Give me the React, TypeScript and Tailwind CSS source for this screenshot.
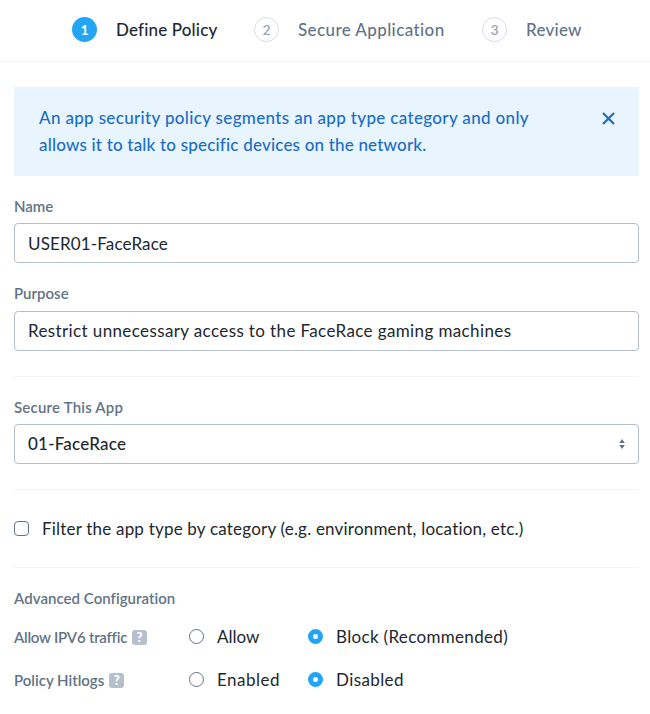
import { type ReactNode } from 'react';

function Step({ n, label, active, width, tracking }: { n: number; label: string; active?: boolean; width: string; tracking: string }) {
  return (
    <div className={`flex items-center ${width}`}>
      <span
        className={`mr-[19px] flex size-[25px] shrink-0 items-center justify-center rounded-full text-[14px] ${
          active ? 'bg-[#22a5f7] font-bold text-white' : 'border border-[#d9dce6] font-semibold text-[#9aa5b5]'
        }`}
      >
        {n}
      </span>
      <span className={`whitespace-nowrap text-[17px] font-medium ${tracking} ${active ? 'text-[#22272e]' : 'text-[#627386]'}`}>{label}</span>
    </div>
  );
}

function Label({ children, className = '' }: { children: ReactNode; className?: string }) {
  return <div className={`whitespace-nowrap text-[15px] leading-5 font-semibold text-[#627386] ${className}`}>{children}</div>;
}

function Help() {
  return (
    <span className="ml-[5px] flex size-[15px] items-center justify-center rounded-[3px] bg-[#b8bfcc] text-[13px] leading-none font-black text-white">?</span>
  );
}

function Radio({ label, checked, tracking = '', className = '' }: { label: string; checked?: boolean; tracking?: string; className?: string }) {
  return (
    <label className={`flex items-center whitespace-nowrap text-[17px] leading-6 ${tracking} ${className}`}>
      <span className={`relative -top-px mr-[13px] size-[15px] shrink-0 rounded-full ${checked ? 'border-[5px] border-[#22a5f7]' : 'border border-[#627386]'}`} />
      {label}
    </label>
  );
}

export default function App() {
  return (
    <div className="h-[714px] w-[650px] overflow-hidden bg-white font-['Lato',sans-serif] text-[#22272e] [font-variant-ligatures:none]">
      <header className="flex h-[62px] items-center border-b border-[#f2f4f6] pb-[2px] pl-[72px]">
        <Step n={1} label="Define Policy" active width="w-[182px]" tracking="tracking-[0.16px]" />
        <Step n={2} label="Secure Application" width="w-[228px]" tracking="tracking-[0.4px]" />
        <Step n={3} label="Review" width="w-[120px]" tracking="tracking-[0.25px]" />
      </header>
      <main className="pt-[25px] pr-[11px] pl-[14px]">
        <section className="flex h-[89px] justify-between bg-[#e9f5fe] pt-[17px] pr-[24px] pl-[25px] text-[17px] leading-[27px] font-medium text-[#1b6dc6]">
          <p className="whitespace-nowrap">
            <span className="tracking-[0.34px]">An app security policy segments an app type category and only</span>
            <br />
            <span className="tracking-[0.19px]">allows it to talk to specific devices on the network.</span>
          </p>
          <svg className="mt-[8px] size-[13px]" viewBox="0 0 13 13" fill="none" stroke="currentColor" strokeWidth="2.2">
            <path d="M1 1l11 11M12 1L1 12" />
          </svg>
        </section>
        <Label className="mt-[20px]">Name</Label>
        <div className="mt-[7px] flex h-10 items-center rounded-[4px] border border-[#b8bfcc] px-[13px] pt-px text-[17px] tracking-[0.15px]">USER01-FaceRace</div>
        <Label className="mt-[20px]">Purpose</Label>
        <div className="mt-[8px] flex h-10 items-center rounded-[4px] border border-[#b8bfcc] px-[13px] text-[17px] tracking-[0.38px]">
          Restrict unnecessary access to the FaceRace gaming machines
        </div>
        <div className="mt-[25px] h-px bg-[#f2f4f6]" />
        <Label className="mt-[20px] tracking-[0.2px]">Secure This App</Label>
        <div className="mt-[7px] flex h-10 items-center justify-between rounded-[4px] border border-[#b8bfcc] px-[13px] text-[17px] font-medium tracking-[0.22px]">
          <span>01-FaceRace</span>
          <svg className="h-[10px] w-[6px]" viewBox="0 0 6 10" fill="#627386">
            <path d="M3 0L5.8 4H.2zM3 10L.2 6h5.6z" />
          </svg>
        </div>
        <div className="mt-[25px] h-px bg-[#f2f4f6]" />
        <label className="mt-[27px] flex h-6 items-center text-[17px] tracking-[0.2px] whitespace-nowrap">
          <span className="relative -top-px mr-[13px] size-[15px] rounded-[4px] border border-[#627386]" />
          Filter the app type by category (e.g. environment, location, etc.)
        </label>
        <div className="mt-[26px] h-px bg-[#f2f4f6]" />
        <Label className="mt-[20px] tracking-[0.04px]">Advanced Configuration</Label>
        <div className="mt-[17px] flex h-6 items-center">
          <div className="flex w-[175px] items-center"><Label className="tracking-[-0.23px]">Allow IPV6 traffic</Label><Help /></div>
          <Radio label="Allow" className="w-[119px]" />
          <Radio label="Block (Recommended)" checked tracking="tracking-[0.33px]" />
        </div>
        <div className="mt-[19px] flex h-6 items-center">
          <div className="flex w-[175px] items-center"><Label>Policy Hitlogs</Label><Help /></div>
          <Radio label="Enabled" tracking="tracking-[0.5px]" className="w-[119px]" />
          <Radio label="Disabled" checked tracking="tracking-[0.4px]" />
        </div>
      </main>
    </div>
  );
}
